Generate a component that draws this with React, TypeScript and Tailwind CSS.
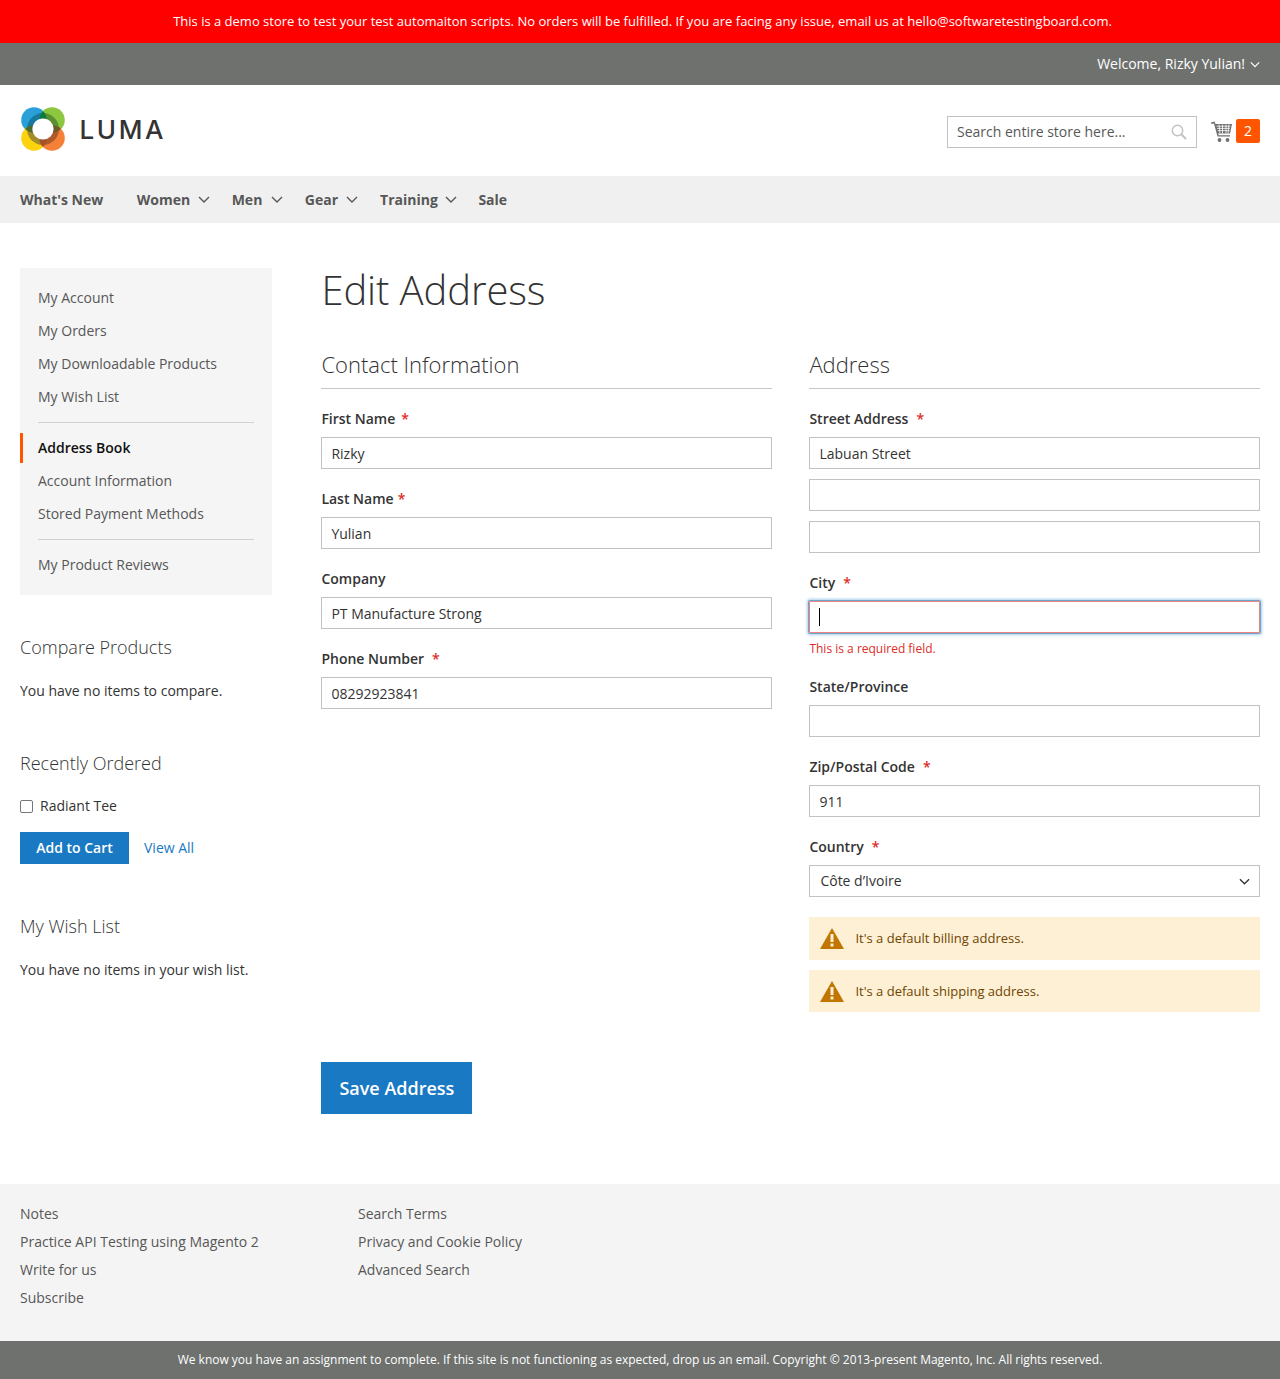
import React from "react";

const Chevron = ({ className = "", color = "#575757" }: { className?: string; color?: string }) => (
  <svg className={className} width="12" height="7" viewBox="0 0 12 7" fill="none">
    <path d="M1 1l5 5 5-5" stroke={color} strokeWidth="1.4" />
  </svg>
);

const Warn = () => (
  <svg width="24" height="21" viewBox="0 0 24 21" className="shrink-0">
    <path d="M12 0 L24 21 H0 Z" fill="#c07600" />
    <rect x="10.5" y="6" width="3" height="8" fill="#fdf0d5" />
    <rect x="10.5" y="15.5" width="3" height="3" fill="#fdf0d5" />
  </svg>
);

const Logo = () => (
  <svg width="44" height="44" viewBox="0 0 44 44" className="shrink-0">
    <circle cx="13" cy="13" r="12.8" fill="#2a9fd8" />
    <circle cx="31" cy="13" r="12.8" fill="#8dc63f" />
    <circle cx="13" cy="31" r="12.8" fill="#fdd20f" />
    <circle cx="31" cy="31" r="12.8" fill="#f58038" />
    <path d="M22 22 L22 6 A16 16 0 0 0 6 22 Z" fill="#17799f" />
    <path d="M22 22 L22 6 A16 16 0 0 1 38 22 Z" fill="#5c8f30" />
    <path d="M22 22 L22 38 A16 16 0 0 1 6 22 Z" fill="#a48c2b" />
    <path d="M22 22 L22 38 A16 16 0 0 0 38 22 Z" fill="#b0592a" />
    <path d="M22 4 A12.8 12.8 0 0 1 22 22 A12.8 12.8 0 0 1 22 4Z" fill="#0b7a3e" />
    <path d="M4 22 A12.8 12.8 0 0 1 22 22 A12.8 12.8 0 0 1 4 22Z" fill="#4a6b2b" />
    <path d="M40 22 A12.8 12.8 0 0 0 22 22 A12.8 12.8 0 0 0 40 22Z" fill="#6f5a26" />
    <path d="M22 40 A12.8 12.8 0 0 1 22 22 A12.8 12.8 0 0 1 22 40Z" fill="#a3522a" />
    <circle cx="22" cy="22" r="10.6" fill="#fff" />
  </svg>
);

const Cart = () => (
  <svg width="22" height="22" viewBox="0 0 22 22" fill="#6f6f6f" className="shrink-0">
    <path d="M0 1.5 L3.6 0.6 L4.4 3 H21 L19 12.6 H7.2 L7.7 14.3 H19 V15.6 H6.5 L3 2.4 L0.4 3Z" />
    <circle cx="8.5" cy="19" r="1.9" />
    <circle cx="16.5" cy="19" r="1.9" />
    <path d="M5.5 5.2 H19.3 M6 7.4 H18.9 M6.6 9.6 H18.5 M8 3.5 L9 12.5 M11.5 3.5 V12.5 M15 3.5 V12.5 M18 3.5 L17 12.5" stroke="#fff" strokeWidth="0.8" fill="none" />
  </svg>
);

const Field = ({ label, value, gap = "ml-1.5", cls = "mb-5" }: { label: string; value: string; gap?: string; cls?: string }) => (
  <div className={cls}>
    <label className="block h-5 leading-5 mb-2 text-sm font-semibold text-[#333]">
      {label}
      {label !== "Company" && label !== "State/Province" && <span className={`${gap} text-[#e02b27]`}>*</span>}
    </label>
    <input
      readOnly
      value={value}
      className="block w-full h-8 px-[9px] border border-[#c2c2c2] bg-white text-sm text-[#333] outline-none"
    />
  </div>
);

const Plain = ({ value, cls }: { value: string; cls: string }) => (
  <input readOnly value={value} className={`block w-full h-8 px-[9px] border border-[#c2c2c2] bg-white text-sm text-[#333] outline-none ${cls}`} />
);

const SideItem = ({ children }: { children: React.ReactNode }) => (
  <li className="h-[33px] pl-[18px] leading-[33px] text-sm text-[#575757]">{children}</li>
);

const Note = ({ children, cls }: { children: React.ReactNode; cls: string }) => (
  <div className={`flex items-center gap-[11px] pl-[11px] bg-[#fdf0d5] text-[13px] text-[#6f4400] ${cls}`}>
    <Warn />
    <span>{children}</span>
  </div>
);

export default function App() {
  return (
    <div className="w-[1280px] h-[1379px] overflow-hidden bg-white font-['Open_Sans',sans-serif] text-sm text-[#333]">
      <div className="h-[43px] bg-[#ff0000] flex items-center justify-center pl-[5px] text-[13px] text-white">
        This is a demo store to test your test automaiton scripts. No orders will be fulfilled. If you are facing any issue, email us at hello@softwaretestingboard.com.
      </div>
      <div className="h-[42px] bg-[#6e716e] flex items-center justify-end pr-5 gap-[5px] text-sm text-white">
        <span>Welcome, Rizky Yulian!</span>
        <Chevron color="#fff" className="w-[10px]" />
      </div>

      <header className="h-[91px] flex items-start justify-between px-5">
        <div className="flex items-center gap-[15px] mt-[22px] ml-[0.5px]">
          <Logo />
          <span className="pt-[1px] font-['Inter',sans-serif] text-[26px] font-medium tracking-[0.1em] text-[#333] leading-none">LUMA</span>
        </div>
        <div className="flex items-center mt-[31px]">
          <div className="w-[250px] h-8 border border-[#c2c2c2] flex items-center justify-between pl-[9px] pr-[9px] text-sm text-[#575757]">
            <span>Search entire store here...</span>
            <svg width="16" height="16" viewBox="0 0 16 16" fill="none" stroke="#c2c2c2" strokeWidth="1.5">
              <circle cx="6.5" cy="6.5" r="5.2" />
              <path d="M10.5 10.5 L15 15" strokeWidth="2" />
            </svg>
          </div>
          <div className="ml-[14px]"><Cart /></div>
          <div className="ml-[3px] mb-[2px] w-6 h-6 rounded-[2px] bg-[#ff5501] text-white text-sm flex items-center justify-center">2</div>
        </div>
      </header>

      <nav className="h-[47px] bg-[#f0f0f0] flex items-center pl-5 text-sm font-bold text-[#575757]">
        <span className="mr-[33.5px]">What's New</span>
        <span>Women</span><Chevron className="ml-[7.5px] mr-[22px]" />
        <span>Men</span><Chevron className="ml-[8.5px] mr-[22px]" />
        <span>Gear</span><Chevron className="ml-[8px] mr-[22px]" />
        <span>Training</span><Chevron className="ml-[7.5px] mr-[21px]" />
        <span>Sale</span>
      </nav>

      <main className="flex pl-5 pr-5 pt-[45px] h-[961px]">
        <aside className="w-[252px] shrink-0 mr-[49.4px]">
          <div className="h-[327px] bg-[#f5f5f5] pt-[13px]">
            <ul>
              <SideItem>My Account</SideItem>
              <SideItem>My Orders</SideItem>
              <SideItem>My Downloadable Products</SideItem>
              <SideItem>My Wish List</SideItem>
            </ul>
            <div className="mx-[18px] mt-[9px] mb-[10px] border-t border-[#d1d1d1]" />
            <ul>
              <li className="h-[31px] leading-[30px] text-sm font-semibold text-[#111]">
                <div className="h-[30px] pl-[15px] border-l-[3px] border-[#ff5501]">Address Book</div>
              </li>
              <SideItem>Account Information</SideItem>
              <SideItem>Stored Payment Methods</SideItem>
            </ul>
            <div className="mx-[18px] mt-[9px] mb-[8px] border-t border-[#d1d1d1]" />
            <ul><SideItem>My Product Reviews</SideItem></ul>
          </div>
          <h3 className="mt-[39px] text-[18px] leading-[26px] font-light text-[#333]">Compare Products</h3>
          <p className="mt-[21px] leading-5">You have no items to compare.</p>
          <h3 className="mt-[49px] text-[18px] leading-[26px] font-light text-[#333]">Recently Ordered</h3>
          <div className="mt-[20px] flex items-center h-[20px]">
            <span className="w-[13px] h-[13px] border border-[#767676] rounded-[2px] bg-white mr-[7px]" />
            <span>Radiant Tee</span>
          </div>
          <div className="mt-4 flex items-center">
            <span className="w-[109px] h-8 bg-[#1979c3] text-white font-semibold flex items-center justify-center">Add to Cart</span>
            <span className="ml-[15px] text-[#1979c3]">View All</span>
          </div>
          <h3 className="mt-[49px] text-[18px] leading-[26px] font-light text-[#333]">My Wish List</h3>
          <p className="mt-[21px] leading-5">You have no items in your wish list.</p>
        </aside>

        <section className="w-[938.6px]">
          <h1 className="text-[40px] font-light leading-[44px] tracking-[-0.1px] text-[#333]">Edit Address</h1>
          <div className="mt-[37px] flex justify-between">
            <div className="w-[450.6px]">
              <h2 className="text-[22px] font-light leading-[28px] h-[40px] pt-[1px] border-b border-[#c6c6c6] mb-5 text-[#333]">Contact Information</h2>
              <Field label="First Name" value="Rizky" />
              <Field label="Last Name" value="Yulian" gap="ml-1" />
              <Field label="Company" value="PT Manufacture Strong" />
              <Field label="Phone Number" value="08292923841" gap="ml-2" />
            </div>
            <div className="w-[450.6px]">
              <h2 className="text-[22px] font-light leading-[28px] h-[40px] pt-[1px] border-b border-[#c6c6c6] mb-5 text-[#333]">Address</h2>
              <Field label="Street Address" value="Labuan Street" gap="ml-2" cls="mb-2.5" />
              <Plain value="" cls="mb-2.5" />
              <Plain value="" cls="mb-5" />
              <label className="block h-5 leading-5 mb-2 text-sm font-semibold">City<span className="ml-2 text-[#e02b27]">*</span></label>
              <div className="h-8 border border-[#ed8380] rounded-[1px] shadow-[0_0_0_1px_#6ea6c9,0_0_3px_2px_#a9cfe9] flex items-center pl-[9px]">
                <span className="w-px h-[18px] bg-black" />
              </div>
              <div className="mt-[7px] mb-5 h-[17px] leading-[17px] text-xs text-[#e02b27]">This is a required field.</div>
              <Field label="State/Province" value="" />
              <Field label="Zip/Postal Code" value="911" gap="ml-2" />
              <label className="block h-5 leading-5 mb-2 text-sm font-semibold">Country<span className="ml-2 text-[#e02b27]">*</span></label>
              <div className="h-8 border border-[#c2c2c2] flex items-center justify-between pl-[10px] pr-[9px] text-sm text-[#333] mb-5">
                <span>Côte d’Ivoire</span>
                <Chevron color="#333" className="w-[11px]" />
              </div>
              <Note cls="h-[43px] mb-2.5">It's a default billing address.</Note>
              <Note cls="h-[42px]">It's a default shipping address.</Note>
            </div>
          </div>
          <div className="mt-[50px] w-[151px] h-[52px] pt-[1px] bg-[#1979c3] text-white text-[18px] font-semibold flex items-center justify-center">Save Address</div>
        </section>
      </main>

      <footer className="h-[157px] bg-[#f4f4f4] pt-4 pl-5 flex text-sm text-[#575757]">
        <ul className="w-[338px] leading-[28px]">
          <li>Notes</li>
          <li>Practice API Testing using Magento 2</li>
          <li>Write for us</li>
          <li>Subscribe</li>
        </ul>
        <ul className="leading-[28px]">
          <li>Search Terms</li>
          <li>Privacy and Cookie Policy</li>
          <li>Advanced Search</li>
        </ul>
      </footer>
      <div className="h-[38px] bg-[#6e716e] flex items-center justify-center text-xs tracking-[-0.01px] text-white">
        We know you have an assignment to complete. If this site is not functioning as expected, drop us an email. Copyright © 2013-present Magento, Inc. All rights reserved.
      </div>
    </div>
  );
}
